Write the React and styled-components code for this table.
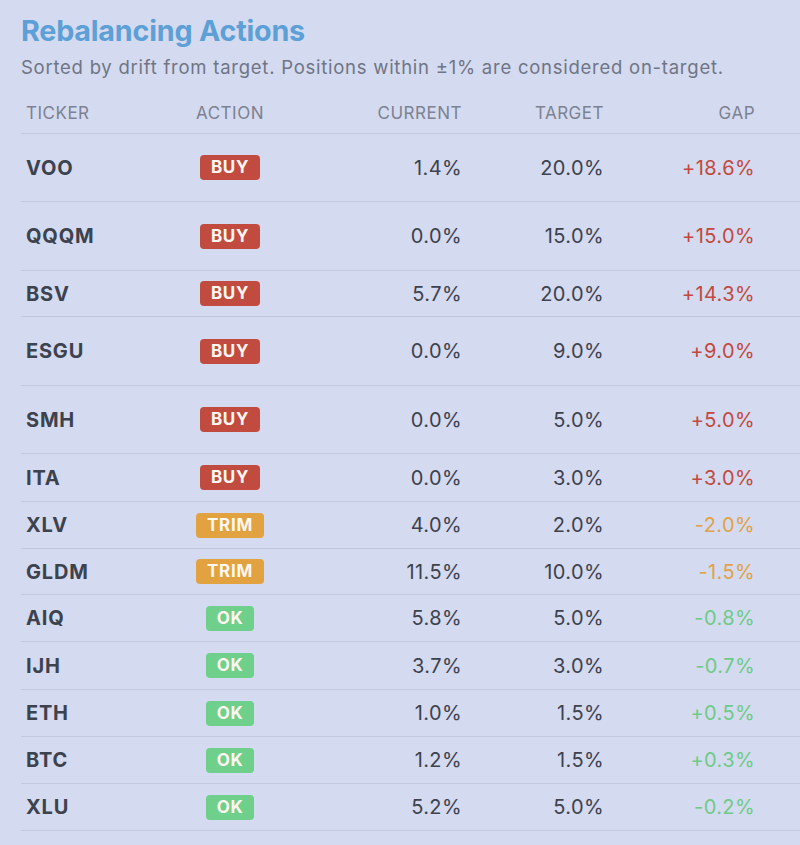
import React from "react";
import styled, { createGlobalStyle } from "styled-components";

const Global = createGlobalStyle`
  html, body { margin: 0; padding: 0; background: #d4daef; }
  body { font-family: Inter, "Noto Sans", sans-serif; -webkit-font-smoothing: antialiased; }
`;

const Page = styled.div`
  width: 800px;
  min-height: 845px;
  box-sizing: border-box;
  padding: 12px 0 0 21px;
  background: #d4daef;
  overflow: hidden;
`;

const Title = styled.h1`
  margin: 0;
  font-size: 28.7px;
  line-height: 38px;
  font-weight: 700;
  color: #5d9fd7;
  letter-spacing: -0.2px;
`;

const Subtitle = styled.p`
  margin: 5px 0 0;
  font-size: 18.5px;
  line-height: 24px;
  color: #6f7585;
  letter-spacing: 0.75px;
  white-space: nowrap;
`;

const Table = styled.div`
  margin-top: 14px;
  width: 779px;
`;

const Row = styled.div`
  display: grid;
  grid-template-columns: 144px 120px 172px 142px 151px 1fr;
  align-items: center;
  box-sizing: border-box;
  height: ${(p) => p.$h}px;
  padding-left: 5px;
  border-bottom: 1.5px solid #c2c8df;
`;

const HeadCell = styled.div`
  font-size: 17px;
  color: #7c8292;
  text-transform: uppercase;
  letter-spacing: 0.5px;
  text-align: ${(p) => p.$align || "left"};
`;

const Ticker = styled.div`
  font-size: 20px;
  font-weight: 700;
  color: #3c424e;
  letter-spacing: 0.8px;
`;

const ActionCell = styled.div`
  display: flex;
  justify-content: center;
`;

const badgeColors = {
  BUY: "#c14b3f",
  TRIM: "#e1a23f",
  OK: "#6ed08b",
};

const Badge = styled.span`
  display: inline-block;
  background: ${(p) => badgeColors[p.$kind]};
  color: #fff8f0;
  font-size: 17px;
  font-weight: 700;
  line-height: 25px;
  padding: 0 11px;
  border-radius: 4px;
  letter-spacing: 0.7px;
`;

const Num = styled.div`
  text-align: right;
  font-size: 20px;
  color: #3c424e;
  letter-spacing: 0.4px;
`;

const gapColors = {
  BUY: "#c2493f",
  TRIM: "#e0a245",
  OK: "#6fcb88",
};

const Gap = styled(Num)`
  color: ${(p) => gapColors[p.$kind]};
`;

const rows = [
  ["VOO", "BUY", "1.4%", "20.0%", "+18.6%", 68],
  ["QQQM", "BUY", "0.0%", "15.0%", "+15.0%", 69],
  ["BSV", "BUY", "5.7%", "20.0%", "+14.3%", 46],
  ["ESGU", "BUY", "0.0%", "9.0%", "+9.0%", 69],
  ["SMH", "BUY", "0.0%", "5.0%", "+5.0%", 68],
  ["ITA", "BUY", "0.0%", "3.0%", "+3.0%", 48],
  ["XLV", "TRIM", "4.0%", "2.0%", "-2.0%", 47],
  ["GLDM", "TRIM", "11.5%", "10.0%", "-1.5%", 46],
  ["AIQ", "OK", "5.8%", "5.0%", "-0.8%", 47],
  ["IJH", "OK", "3.7%", "3.0%", "-0.7%", 48],
  ["ETH", "OK", "1.0%", "1.5%", "+0.5%", 47],
  ["BTC", "OK", "1.2%", "1.5%", "+0.3%", 47],
  ["XLU", "OK", "5.2%", "5.0%", "-0.2%", 47],
];

export default function App() {
  return (
    <Page>
      <Global />
      <Title>Rebalancing Actions</Title>
      <Subtitle>
        Sorted by drift from target. Positions within ±1% are considered on-target.
      </Subtitle>
      <Table>
        <Row $h={41}>
          <HeadCell>Ticker</HeadCell>
          <HeadCell $align="center">Action</HeadCell>
          <HeadCell $align="right">Current</HeadCell>
          <HeadCell $align="right">Target</HeadCell>
          <HeadCell $align="right">Gap</HeadCell>
          <div />
        </Row>
        {rows.map(([t, a, c, tg, g, h]) => (
          <Row key={t} $h={h}>
            <Ticker>{t}</Ticker>
            <ActionCell>
              <Badge $kind={a}>{a}</Badge>
            </ActionCell>
            <Num>{c}</Num>
            <Num>{tg}</Num>
            <Gap $kind={a}>{g}</Gap>
            <div />
          </Row>
        ))}
      </Table>
    </Page>
  );
}
